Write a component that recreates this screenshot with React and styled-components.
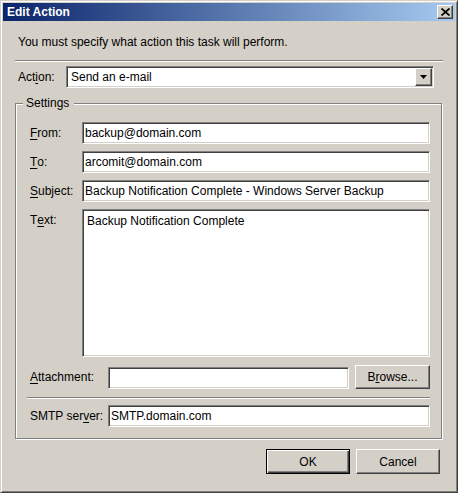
import React from 'react';
import styled, { createGlobalStyle, css } from 'styled-components';

const GlobalStyle = createGlobalStyle`
  html, body {
    margin: 0;
    padding: 0;
    background: #d4d0c8;
  }
  body {
    font-family: "Liberation Sans", Arial, sans-serif;
    font-size: 12px;
    color: #000;
  }
`;

const sunken = css`
  border: 1px solid;
  border-color: #808080 #fff #fff #808080;
  box-shadow: inset 1px 1px 0 #404040, inset -1px -1px 0 #d4d0c8;
  background: #fff;
  box-sizing: border-box;
`;

const raised = css`
  border: 1px solid;
  border-color: #fff #404040 #404040 #fff;
  box-shadow: inset -1px -1px 0 #808080, inset 1px 1px 0 #d4d0c8;
  background: #d4d0c8;
  box-sizing: border-box;
`;

const Window = styled.div`
  width: 458px;
  height: 493px;
  box-sizing: border-box;
  background: #d4d0c8;
  border: 1px solid;
  border-color: #d4d0c8 #404040 #404040 #d4d0c8;
  box-shadow: inset 1px 1px 0 #fff, inset -1px -1px 0 #808080;
  padding: 2px;
  display: flex;
  flex-direction: column;
`;

const TitleBar = styled.div`
  height: 18px;
  display: flex;
  align-items: center;
  justify-content: space-between;
  padding: 0 2px;
  background: linear-gradient(to right, #0a246a, #a6caf0);
  h1 {
    margin: 0;
    font-size: 12px;
    font-weight: bold;
    color: #fff;
    padding-left: 2px;
  }
`;

const CloseButton = styled.div`
  ${raised};
  width: 16px;
  height: 14px;
  display: flex;
  align-items: center;
  justify-content: center;
`;

const Body = styled.div`
  flex: 1;
  display: flex;
  flex-direction: column;
  padding: 0 12px 0 12px;
`;

const Intro = styled.div`
  margin-top: 14px;
  line-height: 14px;
  padding-left: 3px;
`;

const Separator = styled.div`
  height: 0;
  border-top: 1px solid #808080;
  border-bottom: 1px solid #fff;
  margin-top: ${(p) => p.$top || 0}px;
  margin-left: ${(p) => p.$left || 0}px;
`;

const ActionRow = styled.div`
  margin-top: 4px;
  display: flex;
  align-items: center;
  height: 22px;
`;

const Label = styled.label`
  display: flex;
  align-items: center;
  white-space: nowrap;
  width: ${(p) => p.$width || 'auto'};
  padding-left: ${(p) => p.$pad || 0}px;
  box-sizing: border-box;
  align-self: ${(p) => (p.$top ? 'start' : 'center')};
  padding-top: ${(p) => (p.$top ? 4 : 0)}px;
  u {
    text-underline-offset: 2px;
  }
`;

const Combo = styled.div`
  ${sunken};
  width: 368px;
  height: 22px;
  padding: 1px;
  display: flex;
  align-items: center;
  span {
    flex: 1;
    padding-left: 3px;
  }
`;

const DropButton = styled.div`
  ${raised};
  width: 17px;
  height: 18px;
  display: flex;
  align-items: center;
  justify-content: center;
`;

const GroupBox = styled.div`
  position: relative;
  margin-top: 15px;
  margin-right: 1px;
  border: 1px solid #808080;
  box-shadow: inset 1px 1px 0 #fff, 1px 1px 0 #fff;
  padding: 18px 11px 11px 14px;
  display: flex;
  flex-direction: column;
`;

const Legend = styled.span`
  position: absolute;
  top: -8px;
  left: 7px;
  padding: 0 5px 0 3px;
  line-height: 14px;
  background: #d4d0c8;
`;

const FieldGrid = styled.div`
  display: grid;
  grid-template-columns: ${(p) => p.$cols};
  row-gap: 7px;
  column-gap: ${(p) => p.$gap || 0}px;
  align-items: ${(p) => p.$align || 'stretch'};
  margin-top: ${(p) => p.$top || 0}px;
`;

const Field = styled.input`
  ${sunken};
  height: 22px;
  width: 100%;
  padding: 0 2px;
  font: inherit;
  color: #000;
  outline: none;
`;

const Memo = styled.textarea`
  ${sunken};
  height: 148px;
  width: 100%;
  padding: 4px 4px;
  font: inherit;
  line-height: 14px;
  color: #000;
  resize: none;
  outline: none;
`;

const Button = styled.button`
  ${raised};
  width: ${(p) => p.$width || 84}px;
  height: ${(p) => p.$height || 25}px;
  font: inherit;
  color: #000;
  padding: 0;
  ${(p) =>
    p.$default &&
    css`
      border: 1px solid #000;
      box-shadow: inset 1px 1px 0 #fff, inset -1px -1px 0 #404040,
        inset -2px -2px 0 #808080;
    `}
`;

const ButtonRow = styled.div`
  margin-top: 10px;
  display: flex;
  justify-content: flex-end;
  gap: 6px;
  padding-right: 3px;
`;

const App = () => {
  return (
    <>
      <GlobalStyle />
      <Window>
        <TitleBar>
          <h1>Edit Action</h1>
          <CloseButton>
            <svg width="9" height="8" viewBox="0 0 9 8">
              <path d="M0.5 0.5 L8.5 7.5 M8.5 0.5 L0.5 7.5" stroke="#000" strokeWidth="1.7" />
            </svg>
          </CloseButton>
        </TitleBar>
        <Body>
          <Intro>You must specify what action this task will perform.</Intro>
          <Separator $top={11} />
          <ActionRow>
            <Label $width="51px" $pad={3}>
              Act<u>i</u>on:
            </Label>
            <Combo>
              <span>Send an e-mail</span>
              <DropButton>
                <svg width="7" height="4" viewBox="0 0 7 4">
                  <path d="M0 0 H7 L3.5 4 Z" fill="#000" />
                </svg>
              </DropButton>
            </Combo>
          </ActionRow>
          <GroupBox>
            <Legend>Settings</Legend>
            <FieldGrid $cols="52px 1fr">
              <Label>
                <u>F</u>rom:
              </Label>
              <Field readOnly defaultValue="backup@domain.com" />
              <Label>
                <u>T</u>o:
              </Label>
              <Field readOnly defaultValue="arcomit@domain.com" />
              <Label>
                <u>S</u>ubject:
              </Label>
              <Field readOnly defaultValue="Backup Notification Complete - Windows Server Backup" />
              <Label $top>
                T<u>e</u>xt:
              </Label>
              <Memo readOnly defaultValue="Backup Notification Complete" />
            </FieldGrid>
            <FieldGrid $cols="72px 1fr 75px" $gap={6} $align="end" $top={8}>
              <Label>
                <u>A</u>ttachment:
              </Label>
              <Field readOnly defaultValue="" />
              <Button $width={75} $height={24}>
                B<u>r</u>owse...
              </Button>
            </FieldGrid>
            <Separator $top={8} $left={-3} />
            <FieldGrid $cols="78px 1fr" $top={6}>
              <Label>
                SMTP ser<u>v</u>er:
              </Label>
              <Field readOnly defaultValue="SMTP.domain.com" />
            </FieldGrid>
          </GroupBox>
          <ButtonRow>
            <Button $default>OK</Button>
            <Button>Cancel</Button>
          </ButtonRow>
        </Body>
      </Window>
    </>
  );
};

export default App;
